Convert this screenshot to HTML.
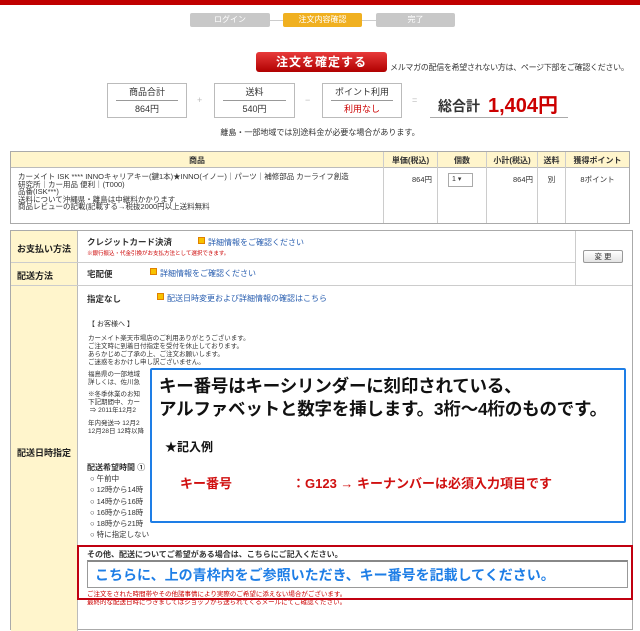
<!DOCTYPE html>
<html><head><meta charset="utf-8"><style>
*{margin:0;padding:0;box-sizing:border-box}
body{width:640px;height:614px;overflow:hidden;background:#fff;font-family:"Liberation Sans","Noto Sans CJK JP",sans-serif;font-size:9px;color:#333;position:relative}
.a{position:absolute}
.step{position:absolute;top:13px;height:14px;border-radius:2px;background:#c8c8c8;color:#fff;font-size:8px;text-align:center;line-height:14px}
.bx{position:absolute;top:83px;height:35px;border:1px solid #bbb;text-align:center;font-size:9px}
.bx .t{height:17px;line-height:17px;margin:0 8px;border-bottom:1px solid #999}
.bx .v{line-height:17px}
.y{background:#fff5cc}
.lbl{position:absolute;left:11px;width:66px;font-weight:bold;font-size:9px;color:#222;padding-left:6px}
.lnk{color:#2a5fb0}
.lnk:before{content:"";display:inline-block;width:5px;height:5px;background:#f7c200;border:1px solid #e08000;margin-right:3px;vertical-align:1px}
.sm{font-size:7px;line-height:8px;color:#333}
</style></head><body>
<div class="a" style="left:0;top:0;width:640px;height:5px;background:#c00000"></div>
<div class="a" style="left:270px;top:20px;width:106px;height:1px;background:#ccc"></div>
<div class="step" style="left:190px;width:80px">ログイン</div>
<div class="step" style="left:283px;width:79px;background:#f0b020">注文内容確認</div>
<div class="step" style="left:376px;width:79px">完了</div>

<div class="a" style="left:256px;top:52px;width:131px;height:20px;border-radius:3px;background:linear-gradient(#e83a3a,#b00000);color:#fff;font-weight:bold;font-size:12px;text-align:center;line-height:20px;letter-spacing:1px">注文を確定する</div>
<div class="a" style="left:390px;top:62px;font-size:8px;white-space:nowrap;letter-spacing:-0.3px">メルマガの配信を希望されない方は、ページ下部をご確認ください。</div>

<div class="bx" style="left:107px;width:80px"><div class="t">商品合計</div><div class="v">864円</div></div>
<div class="a" style="left:197px;top:95px;color:#bbb">+</div>
<div class="bx" style="left:214px;width:81px"><div class="t">送料</div><div class="v">540円</div></div>
<div class="a" style="left:305px;top:95px;color:#bbb">−</div>
<div class="bx" style="left:322px;width:80px"><div class="t">ポイント利用</div><div class="v" style="color:#c00">利用なし</div></div>
<div class="a" style="left:412px;top:95px;color:#bbb">=</div>
<div class="a" style="left:430px;top:88px;width:138px;height:30px;border-bottom:1px solid #aaa"><span style="font-size:14px;font-weight:bold;position:absolute;left:8px;top:8px">総合計</span><span style="font-size:20px;font-weight:bold;color:#c00;position:absolute;left:58px;top:1px">1,404円</span></div>
<div class="a" style="left:0;width:640px;top:127px;text-align:center;font-size:8px">離島・一部地域では別途料金が必要な場合があります。</div>

<div class="a" style="left:10px;top:151px;width:620px;height:73px;border:1px solid #aaa"></div>
<div class="a y" style="left:11px;top:152px;width:618px;height:16px;border-bottom:1px solid #bbb"></div>
<div class="a" style="left:11px;top:155px;width:372px;text-align:center;font-weight:bold;font-size:8px">商品</div>
<div class="a" style="left:383px;top:152px;width:1px;height:71px;background:#ccc"></div>
<div class="a" style="left:384px;top:155px;width:53px;text-align:center;font-weight:bold;font-size:8px">単価(税込)</div>
<div class="a" style="left:437px;top:152px;width:1px;height:71px;background:#ccc"></div>
<div class="a" style="left:438px;top:155px;width:48px;text-align:center;font-weight:bold;font-size:8px">個数</div>
<div class="a" style="left:486px;top:152px;width:1px;height:71px;background:#ccc"></div>
<div class="a" style="left:487px;top:155px;width:50px;text-align:center;font-weight:bold;font-size:8px">小計(税込)</div>
<div class="a" style="left:537px;top:152px;width:1px;height:71px;background:#ccc"></div>
<div class="a" style="left:538px;top:155px;width:27px;text-align:center;font-weight:bold;font-size:8px">送料</div>
<div class="a" style="left:565px;top:152px;width:1px;height:71px;background:#ccc"></div>
<div class="a" style="left:566px;top:155px;width:63px;text-align:center;font-weight:bold;font-size:8px">獲得ポイント</div>
<div class="a" style="left:18px;top:173px;font-size:7.5px;line-height:7.6px">カーメイト ISK **** INNOキャリアキー(鍵1本)★INNO(イノー)｜パーツ｜補修部品 カーライフ創造<br>研究所｜カー用品 便利｜(T000)<br>品番(ISK***)<br>送料について沖縄県・離島は中継料かかります<br>商品レビューの記載(記載する→税抜2000円以上送料無料</div>
<div class="a" style="left:384px;top:174px;width:48px;text-align:right;font-size:7.5px">864円</div>
<div class="a" style="left:448px;top:173px;width:25px;height:14px;border:1px solid #aaa;font-size:7px;line-height:12px;padding-left:3px">1 ▾</div>
<div class="a" style="left:487px;top:174px;width:46px;text-align:right;font-size:7.5px">864円</div>
<div class="a" style="left:538px;top:174px;width:27px;text-align:center;font-size:7.5px">別</div>
<div class="a" style="left:566px;top:174px;width:63px;text-align:center;font-size:7.5px">8ポイント</div>

<div class="a" style="left:10px;top:230px;width:623px;height:400px;border:1px solid #aaa"></div>
<div class="a y" style="left:11px;top:231px;width:67px;height:400px;border-right:1px solid #bbb"></div>
<div class="a" style="left:11px;top:262px;width:565px;height:1px;background:#ccc"></div>
<div class="a" style="left:11px;top:285px;width:621px;height:1px;background:#ccc"></div>
<div class="a" style="left:575px;top:231px;width:1px;height:54px;background:#ccc"></div>
<div class="lbl" style="top:242px">お支払い方法</div>
<div class="lbl" style="top:269px">配送方法</div>
<div class="lbl" style="top:446px">配送日時指定</div>
<div class="a" style="left:583px;top:250px;width:40px;height:13px;border:1px solid #999;border-radius:2px;background:linear-gradient(#fff,#e4e4e4);font-size:7.5px;text-align:center;line-height:11px">変 更</div>

<div class="a" style="left:87px;top:236px;font-weight:bold;font-size:8.5px">クレジットカード決済</div>
<div class="a lnk" style="left:198px;top:237px;font-size:8px">詳細情報をご確認ください</div>
<div class="a" style="left:87px;top:249px;font-size:5.5px;color:#c00">※銀行振込・代金引換がお支払方法として選択できます。</div>
<div class="a" style="left:87px;top:268px;font-weight:bold;font-size:8.5px">宅配便</div>
<div class="a lnk" style="left:150px;top:268px;font-size:8px">詳細情報をご確認ください</div>
<div class="a" style="left:87px;top:293px;font-weight:bold;font-size:8.5px">指定なし</div>
<div class="a lnk" style="left:157px;top:293px;font-size:8px">配送日時変更および詳細情報の確認はこちら</div>

<div class="a sm" style="left:88px;top:321px">【 お客様へ 】</div>
<div class="a sm" style="left:88px;top:335px;font-size:6.5px">カーメイト楽天市場店のご利用ありがとうございます。<br>ご注文時に到着日付指定を受付を休止しております。<br>あらかじめご了承の上、ご注文お願いします。<br>ご迷惑をおかけし申し訳ございません。</div>
<div class="a sm" style="left:88px;top:371px;font-size:6.5px">福島県の一部地域<br>詳しくは、佐川急</div>
<div class="a sm" style="left:88px;top:391px;font-size:6.5px">※冬季休業のお知<br>下記期間中、カー<br>&nbsp;⇒ 2011年12月2</div>
<div class="a sm" style="left:88px;top:420px;font-size:6.5px">年内発送⇒ 12月2<br>12月28日 12時以降</div>

<div class="a" style="left:87px;top:462px;font-weight:bold;font-size:8px">配送希望時間 ①</div>
<div class="a" style="left:90px;top:473px;font-size:7.5px;line-height:11.3px">○ 午前中<br>○ 12時から14時<br>○ 14時から16時<br>○ 16時から18時<br>○ 18時から21時<br>○ 特に指定しない</div>

<div class="a" style="left:150px;top:368px;width:476px;height:155px;border:2px solid #1e7ee6;background:#fff;border-radius:2px"></div>
<div class="a" style="left:159px;top:375px;font-size:17.5px;font-weight:bold;color:#111;line-height:23px;white-space:nowrap;letter-spacing:-0.2px">キー番号はキーシリンダーに刻印されている、<br>アルファベットと数字を挿します。3桁〜4桁のものです。</div>
<div class="a" style="left:165px;top:438px;font-size:12px;font-weight:bold;color:#111">★記入例</div>
<div class="a" style="left:180px;top:473px;font-size:13px;font-weight:bold;color:#d01010;white-space:nowrap">キー番号<span style="display:inline-block;width:60px"></span>：G123 → キーナンバーは必須入力項目です</div>

<div class="a" style="left:77px;top:545px;width:556px;height:55px;border:2px solid #c00010"></div>
<div class="a" style="left:87px;top:549px;font-weight:bold;font-size:8px">その他、配送についてご希望がある場合は、こちらにご記入ください。</div>
<div class="a" style="left:87px;top:560px;width:541px;height:28px;border:1px solid #999;border-top:2px solid #888;background:#fff"></div>
<div class="a" style="left:95px;top:565px;font-size:14px;color:#1e7ee6;font-weight:bold;white-space:nowrap">こちらに、上の青枠内をご参照いただき、キー番号を記載してください。</div>
<div class="a" style="left:87px;top:591px;font-size:6.5px;color:#c00;line-height:8px">ご注文をされた時間帯やその他諸事情により実際のご希望に添えない場合がございます。<br>最終的な配送日時につきましてはショップから送られてくるメールにてご確認ください。</div>
</body></html>
